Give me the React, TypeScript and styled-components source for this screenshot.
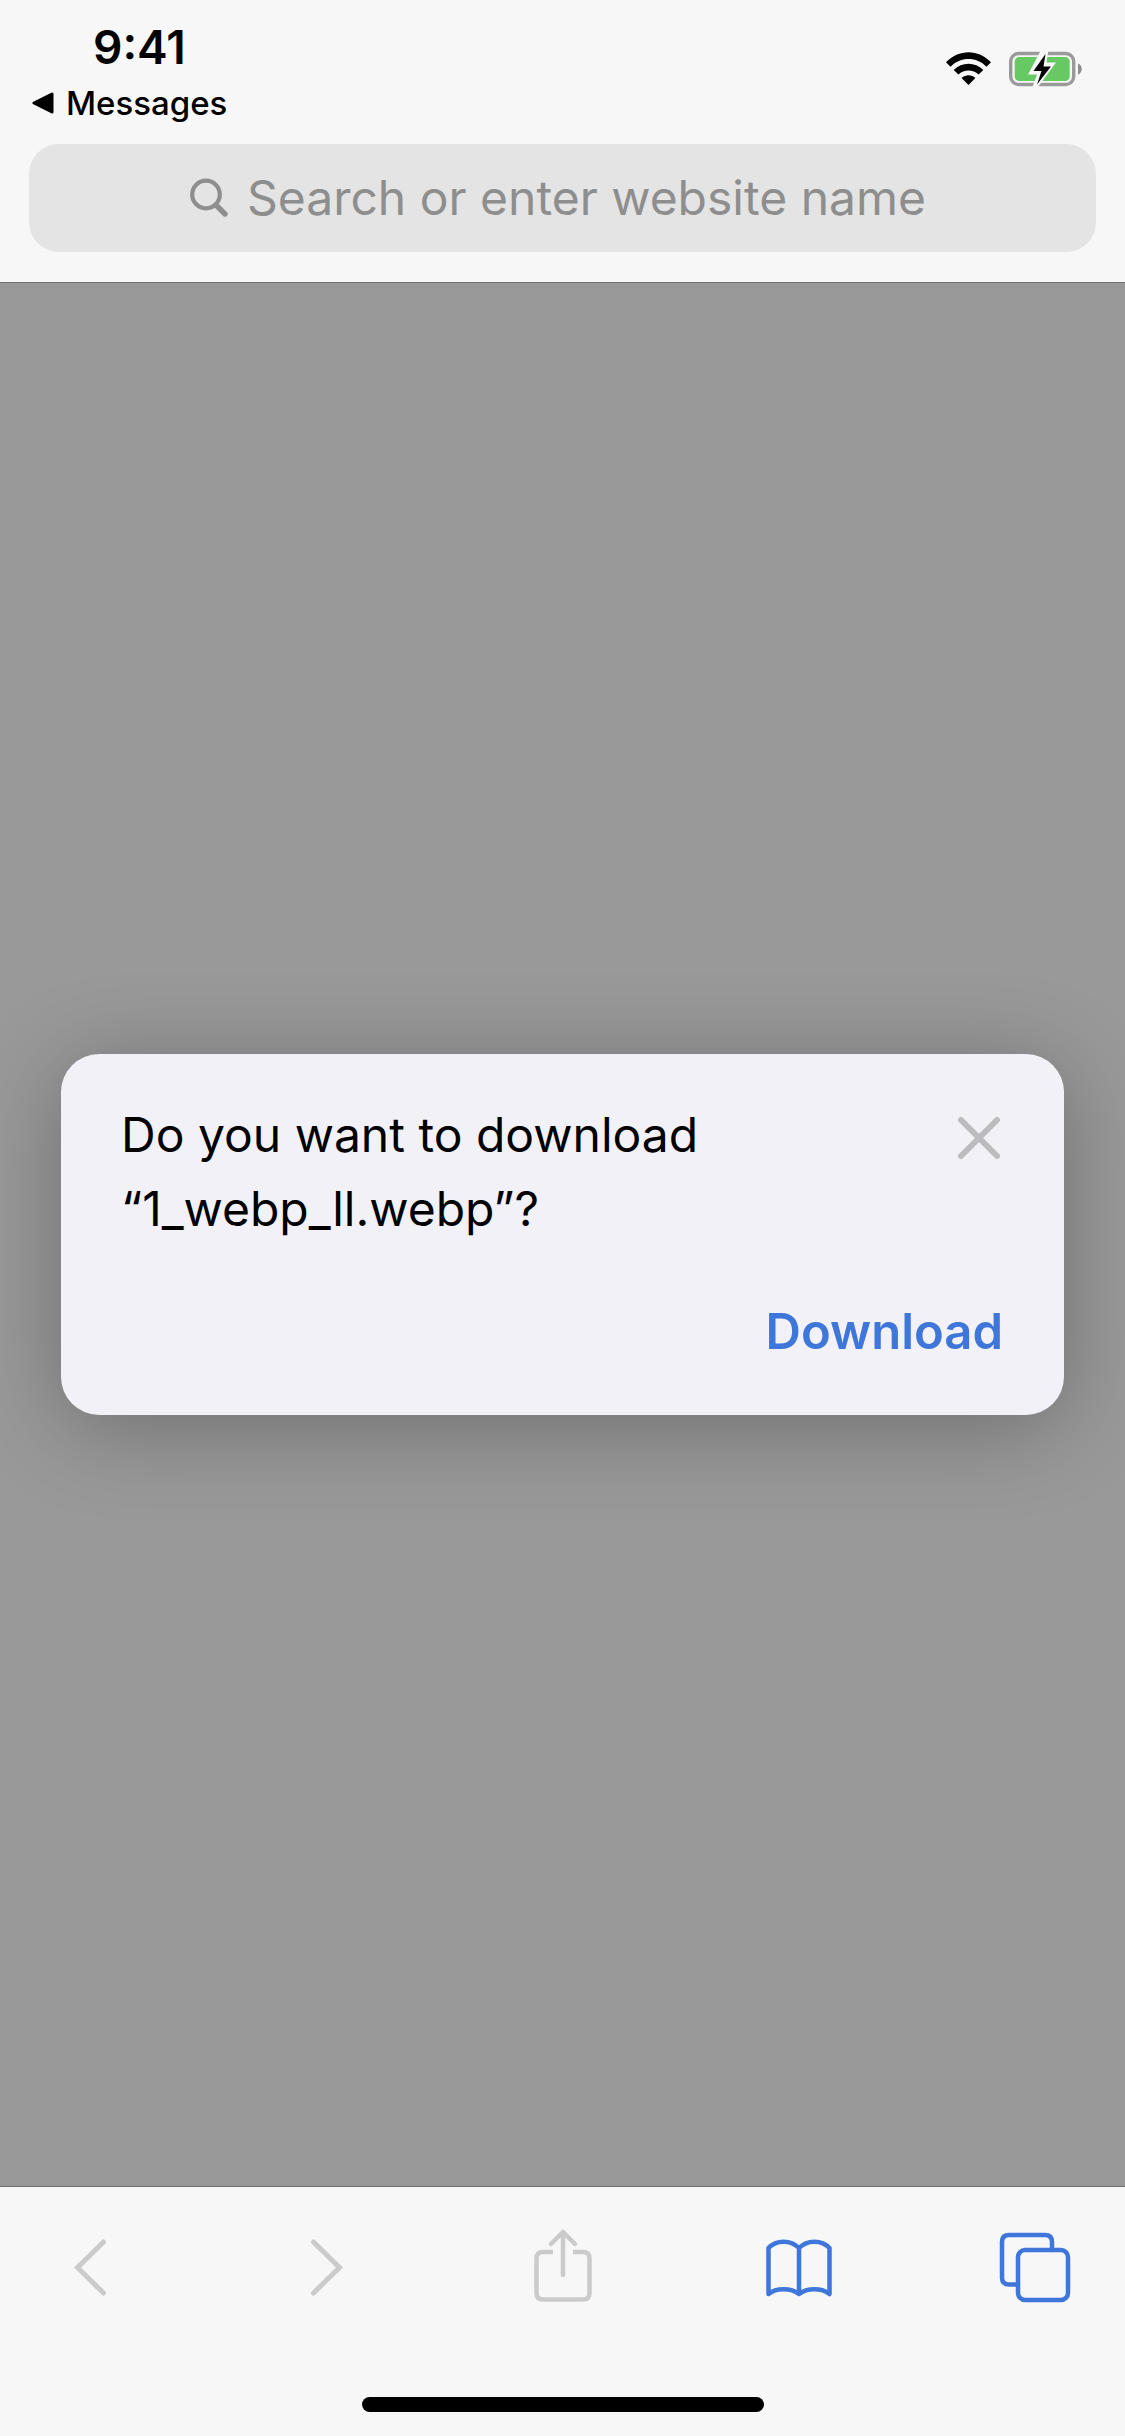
import React from "react";
import styled, { createGlobalStyle } from "styled-components";

const GlobalStyle = createGlobalStyle`
  *, *::before, *::after { box-sizing: border-box; }
  body {
    margin: 0;
    background: #f7f7f7;
    color: #000;
    font-family: Inter, Roboto, "Liberation Sans", sans-serif;
  }
  button, input { font: inherit; color: inherit; }
`;

const Screen = styled.div`
  display: flex;
  flex-direction: column;
  min-height: 100vh;
`;

const Header = styled.header`
  border-bottom: 1px solid #6e6e6e;
  background: #f7f7f7;
`;

const StatusBar = styled.div`
  display: flex;
  justify-content: space-between;
  padding: 21px 42px 21px 32px;
`;

const StatusLeft = styled.div`
  display: flex;
  flex-direction: column;
  align-items: flex-start;
  gap: 10px;
`;

const Time = styled.time`
  padding-left: 61px;
  font-size: 46px;
  font-weight: 600;
  line-height: 52px;
`;

const BackToApp = styled.button`
  display: flex;
  align-items: center;
  gap: 10px;
  padding: 0;
  border: 0;
  background: none;
  font-size: 33px;
  font-weight: 500;
  line-height: 40px;
`;

const StatusIcons = styled.div`
  display: flex;
  align-items: center;
  gap: 18px;
  height: 96px;
`;

const SearchField = styled.label`
  display: flex;
  align-items: center;
  justify-content: center;
  gap: 18px;
  height: 108px;
  margin: 0 29px 30px;
  padding-right: 10px;
  border-radius: 30px;
  background: #e4e4e4;
  color: #8e8e8e;
`;

const SearchInput = styled.input`
  field-sizing: content;
  min-width: 0;
  padding: 0;
  border: 0;
  outline: 0;
  background: transparent;
  font-size: 48px;
  line-height: 60px;
  &::placeholder { color: #8e8e8e; opacity: 1; }
`;

const Page = styled.main`
  display: flex;
  flex: 1;
  align-items: center;
  justify-content: center;
  padding: 61px;
  background: #999;
`;

const Dialog = styled.section`
  flex: 1;
  padding: 44px 61px 46px 60px;
  border-radius: 38px;
  background: #f2f1f7;
  box-shadow: 0 12px 90px rgba(0, 0, 0, 0.28);
`;

const DialogTop = styled.div`
  display: flex;
  align-items: flex-start;
  justify-content: space-between;
`;

const Question = styled.h1`
  max-width: 680px;
  margin: 0;
  font-size: 48px;
  font-weight: 400;
  line-height: 74px;
`;

const IconButton = styled.button<{ $tone: string; $width: number }>`
  display: grid;
  place-items: center;
  width: ${(p) => p.$width}px;
  height: 80px;
  padding: 0;
  border: 0;
  background: none;
  color: ${(p) => p.$tone};
`;

const DialogActions = styled.div`
  display: flex;
  justify-content: flex-end;
  margin-top: 49px;
`;

const DownloadButton = styled.button`
  padding: 0;
  border: 0;
  background: none;
  color: #3e76da;
  font-size: 49px;
  font-weight: 600;
  line-height: 74px;
`;

const Footer = styled.footer`
  border-top: 1px solid #6e6e6e;
  background: #f7f7f7;
`;

const Toolbar = styled.nav`
  display: flex;
  justify-content: space-between;
  padding: 40px 50px 90px;
`;

const HomeIndicator = styled.div`
  width: 402px;
  height: 15px;
  margin: 0 auto 24px;
  border-radius: 8px;
  background: #000;
`;

const GREY = "#cbcbcb";
const BLUE = "#3e76da";

const stroke = {
  fill: "none",
  stroke: "currentColor",
  strokeLinecap: "round" as const,
  strokeLinejoin: "round" as const,
};

const BackTriangle = () => (
  <svg width="24" height="24" viewBox="0 0 24 24" aria-hidden="true">
    <path d="M2 12 20 3V21Z" fill="currentColor" stroke="currentColor" strokeWidth="3" strokeLinejoin="round" />
  </svg>
);

const Wifi = () => (
  <svg width="45" height="34" viewBox="0 0 45 34" role="img" aria-label="Wi-Fi">
    <path d="M0 10.2C12.500-3.200 32.500-3.200 45 10.200L40.500 14.800C30.500 4.500 14.500 4.500 4.500 14.800Z" />
    <path d="M7.700 18C16 9.500 29 9.500 37.300 18L32.600 22.600C27 17 18 17 12.400 22.600Z" />
    <path d="M15.600 25.900C19.500 22.300 25.500 22.300 29.400 25.900L22.500 33Z" />
  </svg>
);

const Battery = () => (
  <svg width="74" height="38" viewBox="0 0 74 38" role="img" aria-label="Battery charging">
    <rect x="1.700" y="3.500" width="63" height="31" rx="8" fill="none" stroke="#9a9a9a" strokeWidth="3.400" />
    <rect x="5.700" y="7" width="55" height="24" rx="4.500" fill="#67c964" />
    <path d="M69 13.500C74 15 74 23 69 24.500Z" fill="#8e8e8e" />
    <path d="M32 0H39.500L37.500 12.500H47L29 37H23.500L28 24.500H19Z" fill="#f7f7f7" />
    <path d="M36.500 4 24.500 21H32.500L28 34.500 42 16.500H34.500Z" />
  </svg>
);

const SearchIcon = () => (
  <svg width="40" height="40" viewBox="0 0 40 40" aria-hidden="true" {...stroke}>
    <circle cx="17" cy="16.500" r="13.800" strokeWidth="4.200" />
    <path d="M27 27 36 36" strokeWidth="5.400" />
  </svg>
);

const CloseIcon = () => (
  <svg width="44" height="44" viewBox="0 0 44 44" aria-hidden="true" {...stroke} strokeWidth="6">
    <path d="M4 4 40 40M40 4 4 40" />
  </svg>
);

const Chevron = ({ d }: { d: string }) => (
  <svg width="80" height="80" viewBox="0 0 80 80" aria-hidden="true" {...stroke} strokeWidth="5" strokeLinejoin="miter">
    <path d={d} />
  </svg>
);

const ShareIcon = () => (
  <svg width="80" height="80" viewBox="0 0 80 80" aria-hidden="true" {...stroke} strokeWidth="4.500">
    <path
      d="M30 25H20Q13.500 25 13.500 31.500V66Q13.500 72.500 20 72.500H60Q66.500 72.500 66.500 66V31.500Q66.500 25 60 25H50"
      strokeLinecap="butt"
    />
    <path d="M40 48V5M28 17 40 5 52 17" />
  </svg>
);

const BookIcon = () => (
  <svg width="80" height="80" viewBox="0 0 80 80" aria-hidden="true" {...stroke} strokeWidth="4.500">
    <path d="M40 21C32 12.500 17 12.500 9.500 21V67C17 60.500 32 60.500 40 67C48 60.500 63 60.500 70.500 67V21C63 12.500 48 12.500 40 21V67" />
  </svg>
);

const TabsIcon = () => (
  <svg width="80" height="80" viewBox="0 0 80 80" aria-hidden="true" {...stroke} strokeWidth="4.500">
    <rect x="23" y="23" width="50" height="50" rx="7" />
    <path d="M23 57.500H14Q7 57.500 7 50.500V15Q7 8 14 8H50Q57 8 57 15V23" />
  </svg>
);

export default function App() {
  return (
    <Screen>
      <GlobalStyle />
      <Header>
        <StatusBar>
          <StatusLeft>
            <Time>9:41</Time>
            <BackToApp type="button">
              <BackTriangle />
              Messages
            </BackToApp>
          </StatusLeft>
          <StatusIcons>
            <Wifi />
            <Battery />
          </StatusIcons>
        </StatusBar>
        <SearchField>
          <SearchIcon />
          <SearchInput
            type="text"
            size={26}
            aria-label="Search or enter website name"
            placeholder="Search or enter website name"
          />
        </SearchField>
      </Header>

      <Page>
        <Dialog role="dialog" aria-labelledby="download-question">
          <DialogTop>
            <Question id="download-question">
              Do you want to download
              <br />
              “1_webp_ll.webp”?
            </Question>
            <IconButton type="button" aria-label="Close" $tone="#bcbcc0" $width={48}>
              <CloseIcon />
            </IconButton>
          </DialogTop>
          <DialogActions>
            <DownloadButton type="button">Download</DownloadButton>
          </DialogActions>
        </Dialog>
      </Page>

      <Footer>
        <Toolbar aria-label="Browser">
          <IconButton type="button" aria-label="Back" $tone={GREY} $width={80}>
            <Chevron d="M53.500 15 27.500 40.500 53.500 66" />
          </IconButton>
          <IconButton type="button" aria-label="Forward" $tone={GREY} $width={80}>
            <Chevron d="M27.500 15 53.500 40.500 27.500 66" />
          </IconButton>
          <IconButton type="button" aria-label="Share" $tone={GREY} $width={80}>
            <ShareIcon />
          </IconButton>
          <IconButton type="button" aria-label="Bookmarks" $tone={BLUE} $width={80}>
            <BookIcon />
          </IconButton>
          <IconButton type="button" aria-label="Tabs" $tone={BLUE} $width={80}>
            <TabsIcon />
          </IconButton>
        </Toolbar>
        <HomeIndicator />
      </Footer>
    </Screen>
  );
}
